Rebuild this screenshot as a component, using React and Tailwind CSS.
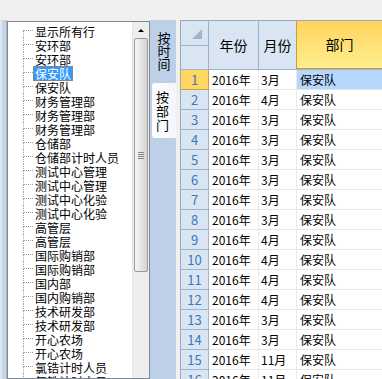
const tree = [
  '显示所有行', '安环部', '安环部', '保安队', '保安队', '财务管理部', '财务管理部', '财务管理部',
  '仓储部', '仓储部计时人员', '测试中心管理', '测试中心管理', '测试中心化验', '测试中心化验',
  '高管层', '高管层', '国际购销部', '国际购销部', '国内部', '国内购销部', '技术研发部', '技术研发部',
  '开心农场', '开心农场', '氯锆计时人员', '氯锆计时人员',
]

const months = ['3月', '4月', '3月', '3月', '3月', '3月', '3月', '3月', '4月', '4月', '4月', '4月', '3月', '3月', '11月', '11月']

function TreeRow({ label, first, selected }) {
  return (
    <div className="flex h-[14px] items-center">
      <div className="flex h-full w-[10px] flex-col">
        <div className={`h-[7px] border-b border-dotted border-[#a0a0a0] ${first ? '' : 'border-l'}`} />
        <div className="flex-1 border-l border-dotted border-[#a0a0a0]" />
      </div>
      <span className={`whitespace-nowrap px-[1px] leading-[13px] border border-dotted ${selected ? 'border-[#c8781e] bg-[#3399ff] text-white' : 'border-transparent'}`}>{label}</span>
    </div>
  )
}

function Scrollbar() {
  return (
    <div className="flex w-[17px] flex-col bg-[#eeeeee] border-l border-[#e4e4e4]">
      <div className="flex h-[16px] items-center justify-center">
        <div className="h-0 w-0 border-x-[3px] border-b-[3px] border-x-transparent border-b-black" />
      </div>
      <div className="mx-[1px] flex h-[234px] items-center justify-center rounded-[2px] border border-[#999] bg-gradient-to-r from-[#f6f6f6] to-[#d4d4d4]">
        <div className="flex flex-col gap-[1px]">
          <div className="h-[1px] w-[6px] bg-[#888]" />
          <div className="h-[1px] w-[6px] bg-[#888]" />
          <div className="h-[1px] w-[6px] bg-[#888]" />
          <div className="h-[1px] w-[6px] bg-[#888]" />
        </div>
      </div>
    </div>
  )
}

function VText({ chars, step }) {
  return (
    <div className="flex flex-col items-center">
      {chars.map((c) => <span key={c} className={`block overflow-visible ${step}`}>{c}</span>)}
    </div>
  )
}

function Grid() {
  return (
    <div className="flex-1 overflow-hidden border-l border-t border-[#9aa7b8] bg-white">
      <div className="flex h-[49px] border-b border-[#9eb3ca] bg-[#dae5f3] text-[14px]">
        <div className="flex w-[28px] flex-col border-r border-[#9eb3ca]">
          <div className="flex h-[25px] items-end justify-end border-b border-[#9eb3ca] pb-[6px] pr-[6px]">
            <svg width="10" height="10" viewBox="0 0 10 10"><path d="M10 0 L10 10 L0 10 Z" fill="#a6b4c6" /></svg>
          </div>
          <div className="flex-1" />
        </div>
        <div className="flex w-[50px] items-center justify-center border-r border-[#9eb3ca]">年份</div>
        <div className="flex w-[38px] items-center justify-center border-r border-[#9eb3ca]">月份</div>
        <div className="-ml-px flex flex-1 items-center justify-center border-b border-l border-[#d29a3a] bg-gradient-to-b from-[#ffd45e] to-[#ffee8c]">部门</div>
      </div>
      {months.map((m, i) => (
        <div key={i} className="flex h-[20px] border-b border-[#e6e6e6]">
          <div className={`-mb-px flex w-[28px] items-center justify-center border-b border-r text-[13px] text-[#3b78b8] ${i === 0 ? 'border-[#d29a3a] bg-[#ffd864]' : 'border-[#9eb3ca] bg-[#dae5f3]'}`}>{i + 1}</div>
          <div className="flex w-[50px] items-center border-r border-[#ebebeb] pl-[3px]">2016年</div>
          <div className="flex w-[38px] items-center border-r border-[#ebebeb] pl-[2px]">{m}</div>
          <div className={`flex flex-1 items-center pl-[3px] ${i === 0 ? 'bg-[#b5d8fc]' : ''}`}>保安队</div>
        </div>
      ))}
    </div>
  )
}

export default function App() {
  return (
    <div className="flex h-[379px] w-[382px] flex-col overflow-hidden bg-[#f0f0f0] font-['Noto_Sans_CJK_SC',sans-serif] text-[12px] text-black">
      <div className="h-[20px] shrink-0" />
      <div className="flex h-[359px]">
        <div className="flex w-[7px]">
          <div className="w-[2px] bg-[#dfe6ee]" />
          <div className="w-[4px] bg-[#c6d6e9]" />
          <div className="w-[1px] bg-[#a9bbd0]" />
        </div>
        <div className="mt-[1px] flex w-[143px] border border-[#828790] bg-white">
          <div className="flex-1 overflow-hidden pl-[15px] pt-[2px]">
            {tree.map((t, i) => <TreeRow key={i} label={t} first={i === 0} selected={i === 3} />)}
          </div>
          <Scrollbar />
        </div>
        <div className="w-[26px] bg-[#bdd0e8] pt-[11px] text-[13px] leading-[13px]">
          <div className="pl-[2px]">
            <VText chars={['按', '时', '间']} step="h-[13px]" />
          </div>
          <div className="ml-[2px] mt-[13px] flex h-[55px] flex-col items-center justify-center rounded-l-[3px] bg-gradient-to-r from-white to-[#f2f5f9] pr-[3px]">
            <VText chars={['按', '部', '门']} step="h-[14px]" />
          </div>
        </div>
        <div className="w-[4px]" />
        <Grid />
      </div>
    </div>
  )
}
